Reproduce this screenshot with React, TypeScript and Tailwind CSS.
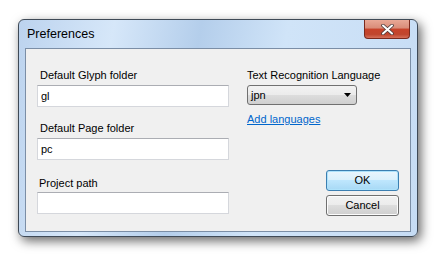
import React from "react";

const font = { fontFamily: '"Liberation Sans", Arial, sans-serif' };

function TextBox({ value }: { value?: string }) {
  return (
    <div className="h-[22px] w-[192px] border border-[#d5d7dc] border-t-[#abadb3] bg-white pl-[3px] flex items-center text-[11px] text-black leading-none">
      {value}
    </div>
  );
}

export default function App() {
  return (
    <div
      className="w-[439px] h-[257px] bg-white pl-[18px] pt-[19px] overflow-hidden"
      style={font}
    >
      <div className="relative w-[400px] h-[218px] rounded-[6px] border border-[#3f4a57] bg-[linear-gradient(100deg,#bcd3ee_0%,#d6e7f9_22%,#b4ceeb_42%,#d0e4f8_62%,#c6dcf4_100%)] shadow-[3px_4px_11px_rgba(0,0,0,0.6)] flex flex-col">
        <div className="h-[28px] flex items-start justify-between pl-[8px] pr-[7px]">
          <div className="pt-[7px] text-[12.5px] text-black leading-[15px] whitespace-nowrap">Preferences</div>
          <div className="w-[46px] h-[19px] rounded-b-[4px] border border-t-0 border-[#7a2a1e] bg-[linear-gradient(180deg,#e9a896_0%,#d98c78_45%,#c8432a_50%,#c0462e_80%,#d5705a_100%)] flex items-center justify-center">
            <svg width="13" height="11" viewBox="0 0 13 11">
              <path d="M2 1.5 L11 9.5 M11 1.5 L2 9.5" stroke="#4a3a3a" strokeWidth="3.6" strokeLinecap="round" />
              <path d="M2 1.5 L11 9.5 M11 1.5 L2 9.5" stroke="#ffffff" strokeWidth="2" strokeLinecap="round" />
            </svg>
          </div>
        </div>
        <div className="mx-[6px] mb-[4px] flex-1 border border-[#7b8ea6] bg-[#f0f0f0] flex pl-[11px] pr-[11px] pt-[19px] pb-[15px] text-[11px] text-black whitespace-nowrap">
          <div className="w-[192px] flex flex-col">
            <div className="h-[15px] leading-[15px] mb-[2px] pl-[3px]">Default Glyph folder</div>
            <TextBox value="gl" />
            <div className="h-[15px] leading-[15px] mt-[14px] mb-[2px] pl-[3px]">Default Page folder</div>
            <TextBox value="pc" />
            <div className="h-[15px] leading-[15px] mt-[16px] mb-[1px] pl-[2px]">Project path</div>
            <TextBox />
          </div>
          <div className="ml-[18px] flex-1 flex flex-col">
            <div className="h-[15px] leading-[15px] mb-[2px]">Text Recognition Language</div>
            <div className="w-[110px] h-[20px] rounded-[3px] border border-[#707070] bg-[linear-gradient(180deg,#f2f2f2_0%,#ebebeb_50%,#dddddd_50%,#cfcfcf_100%)] flex items-center justify-between pl-[3px] pr-[5px]">
              <span className="leading-none">jpn</span>
              <svg width="7" height="4" viewBox="0 0 7 4">
                <path d="M0 0 H7 L3.5 4 Z" fill="#000" />
              </svg>
            </div>
            <div className="mt-[7px] h-[15px] leading-[15px] text-[#0066cc] underline">Add languages</div>
            <div className="mt-auto self-end flex flex-col gap-[4px]">
              <div className="w-[73px] h-[21px] rounded-[3px] border border-[#3c7fb1] bg-[linear-gradient(180deg,#eaf6fd_0%,#d9f0fc_50%,#bee6fd_50%,#a7d9f5_100%)] shadow-[inset_0_0_0_1px_#aee2fb] flex items-center justify-center leading-none">
                OK
              </div>
              <div className="w-[73px] h-[21px] rounded-[3px] border border-[#707070] bg-[linear-gradient(180deg,#f2f2f2_0%,#ebebeb_50%,#dddddd_50%,#cfcfcf_100%)] shadow-[inset_0_0_0_1px_#fcfcfc] flex items-center justify-center leading-none">
                Cancel
              </div>
            </div>
          </div>
        </div>
      </div>
    </div>
  );
}
